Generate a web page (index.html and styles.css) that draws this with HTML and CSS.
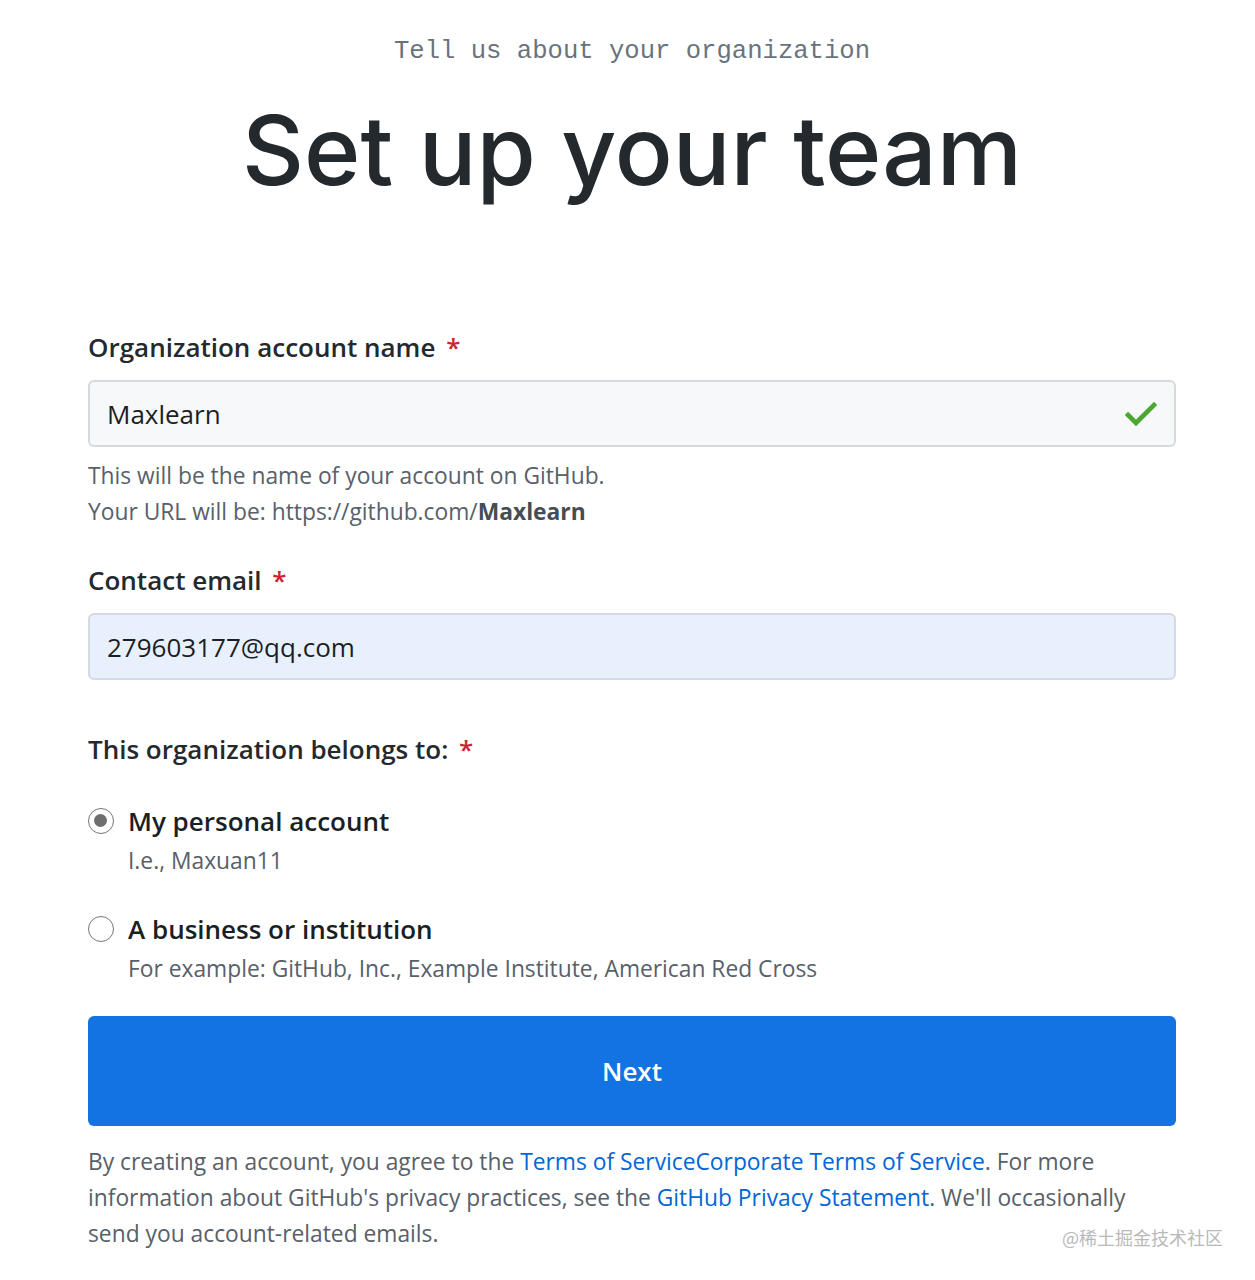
FILE: index.html
```html
<!DOCTYPE html>
<html lang="en">
<head>
<meta charset="utf-8">
<title>Set up your team</title>
<link rel="stylesheet" href="styles.css">
</head>
<body>
<main class="page">
  <header class="hero">
    <p class="hero-sub">Tell us about your organization</p>
    <h1 class="hero-title">Set up your team</h1>
  </header>

  <form class="form">
    <div class="field">
      <label class="label">Organization account name <span class="req">*</span></label>
      <div class="input input-ok">
        <span class="input-text">Maxlearn</span>
        <svg class="check" viewBox="0 0 32 28" width="32" height="28"><path fill="none" stroke="#4aa832" stroke-width="4.6" stroke-linecap="square" d="M3 15 L11 23 L29 5"/></svg>
      </div>
      <p class="note">This will be the name of your account on GitHub.<br>Your URL will be: https://github.com/<strong>Maxlearn</strong></p>
    </div>

    <div class="field">
      <label class="label">Contact email <span class="req">*</span></label>
      <div class="input input-fill">
        <span class="input-text">279603177@qq.com</span>
      </div>
    </div>

    <div class="field field-radios">
      <label class="label">This organization belongs to: <span class="req">*</span></label>
      <div class="radio">
        <span class="radio-dot checked"></span>
        <div class="radio-body">
          <div class="radio-title">My personal account</div>
          <div class="radio-note">I.e., Maxuan11</div>
        </div>
      </div>
      <div class="radio">
        <span class="radio-dot"></span>
        <div class="radio-body">
          <div class="radio-title">A business or institution</div>
          <div class="radio-note">For example: GitHub, Inc., Example Institute, American Red Cross</div>
        </div>
      </div>
    </div>

    <button type="button" class="btn">Next</button>

    <p class="legal">By creating an account, you agree to the <a href="#">Terms of Service</a><a href="#">Corporate Terms of Service</a>. For more information about GitHub's privacy practices, see the <a href="#">GitHub Privacy Statement</a>. We'll occasionally send you account-related emails.</p>
  </form>
  <div class="watermark">@稀土掘金技术社区</div>
</main>
</body>
</html>
```
FILE: styles.css
```css
* { box-sizing: border-box; }
html, body { margin: 0; padding: 0; background: #fff; }
body {
  font-family: "Open Sans", "Noto Sans", sans-serif;
  color: #24292e;
}
.page {
  position: relative;
  width: 1255px;
  min-height: 1280px;
  padding: 0 79px 0 88px;
}
.hero { text-align: center; padding-top: 34px; }
.hero-sub {
  margin: 0;
  font-family: "Liberation Mono", "DejaVu Sans Mono", monospace;
  font-size: 25.6px;
  line-height: 36px;
  color: #6a737d;
}
.hero-title {
  margin: 18px 0 0;
  font-family: Inter, Roboto, sans-serif;
  font-weight: 500;
  font-size: 96px;
  line-height: 124px;
  color: #24292e;
}
.form { margin-top: 117px; }
.field { margin-bottom: 32px; }
.label {
  display: block;
  font-size: 26px;
  font-weight: 600;
  line-height: 36px;
  margin-bottom: 15px;
}
.req { color: #cb2431; margin-left: 4px; }
.input {
  height: 67px;
  border: 2px solid #d6dade;
  border-radius: 6px;
  background: #f6f8fa;
  display: flex;
  align-items: center;
  justify-content: space-between;
  padding: 0 17px 0 17px;
}
.input-fill { background: #e8f0fe; }
.input-text { font-size: 26px; color: #1b1f23; }
.check { display: block; margin-top: 1px; }
.note {
  margin: 11px 0 0;
  font-size: 22.8px;
  line-height: 36px;
  color: #586069;
}
.note strong { color: #444d56; font-weight: 700; }
.field-radios { margin-top: 51px; margin-bottom: 29px; }
.field-radios .label { margin-bottom: 36px; }
.radio { display: flex; align-items: flex-start; margin-bottom: 32px; }
.radio:last-child { margin-bottom: 0; }
.radio-dot {
  width: 26px; height: 26px;
  border: 1.5px solid #767676;
  border-radius: 50%;
  margin-top: 5px;
  margin-right: 14px;
  flex: none;
  position: relative;
  background: #fff;
}
.radio-dot.checked::after {
  content: "";
  position: absolute;
  left: 5px; top: 5px;
  width: 13px; height: 13px;
  border-radius: 50%;
  background: #6e6e6e;
}
.radio-title { font-size: 26px; font-weight: 600; line-height: 36px; color: #1b1f23; }
.radio-note { font-size: 22.8px; line-height: 36px; color: #586069; margin-top: 4px; }
.btn {
  display: block;
  width: 100%;
  height: 110px;
  border: 0;
  border-radius: 6px;
  background: #1373e3;
  color: #fff;
  font-family: inherit;
  font-size: 26px;
  font-weight: 600;
  cursor: pointer;
}
.legal {
  margin: 18px 0 0;
  font-size: 22.8px;
  line-height: 36px;
  color: #586069;
}
.legal a { color: #0366d6; text-decoration: none; }
.watermark {
  position: absolute;
  right: 32px;
  bottom: 30px;
  font-family: "Noto Sans CJK SC", sans-serif;
  font-size: 18px;
  color: #b9b9b9;
}
```
